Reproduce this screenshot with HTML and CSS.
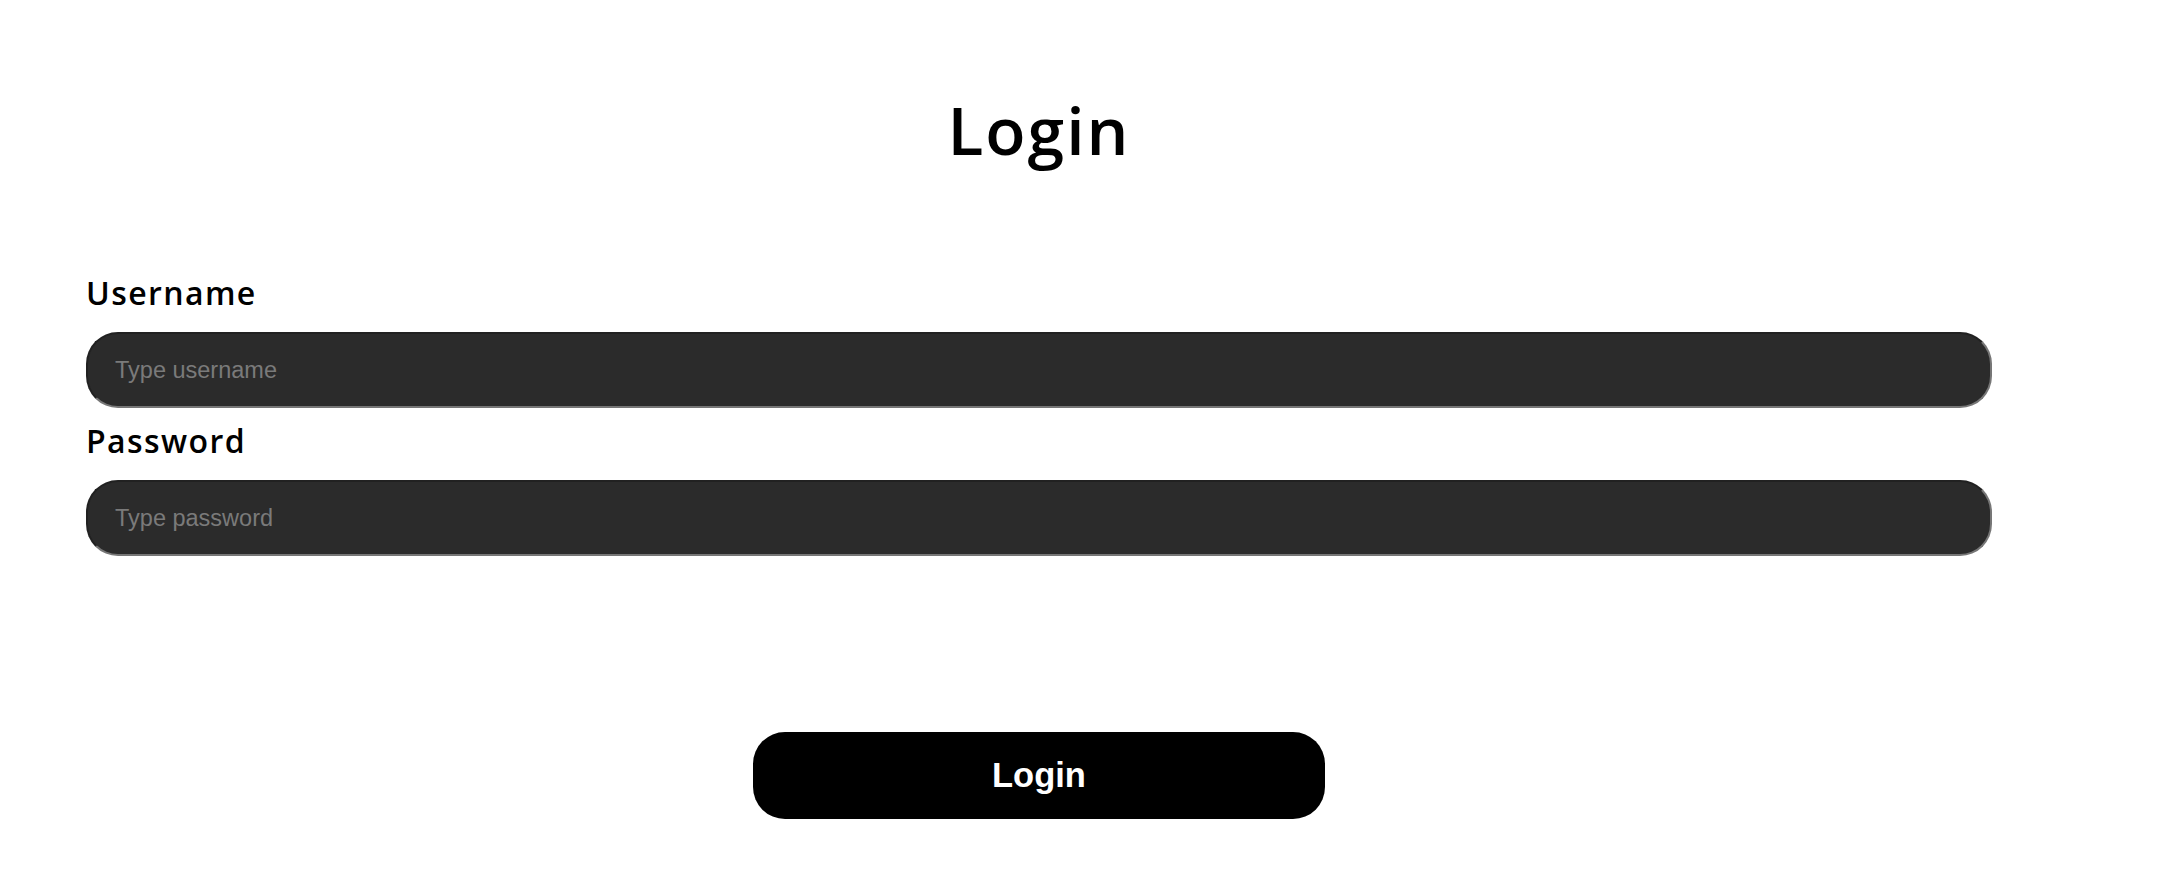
FILE: index.html
```html
<!DOCTYPE html>
<html>
<head>
<meta charset="utf-8">
<link rel="stylesheet" href="styles.css">
</head>
<body>
<main class="page">
  <h1 class="title">Login</h1>
  <form class="form">
    <label class="label" for="u">Username</label>
    <input class="field" id="u" type="text" placeholder="Type username">
    <label class="label" for="p">Password</label>
    <input class="field" id="p" type="password" placeholder="Type password">
    <div class="actions">
      <button class="btn" type="button">Login</button>
    </div>
  </form>
</main>
</body>
</html>
```

FILE: styles.css
```css
html, body {
  margin: 0;
  padding: 0;
  background: #fff;
}
.page {
  font-family: "Open Sans", "Noto Sans", sans-serif;
  color: #000;
  padding: 0 171px 0 86px;
}
.title {
  margin: 0;
  padding-top: 89px;
  text-align: center;
  font-size: 66px;
  line-height: 80px;
  font-weight: 600;
  letter-spacing: 2px;
}
.form {
  display: flex;
  flex-direction: column;
  margin-top: 104px;
}
.label {
  font-size: 32px;
  line-height: 40px;
  font-weight: 600;
  letter-spacing: 1.4px;
  margin-bottom: 19px;
}
.field {
  box-sizing: border-box;
  height: 76px;
  width: 100%;
  border-radius: 32px;
  background: #2b2b2b;
  border: 2px inset #767676;
  padding: 0 27px;
  font-family: "Liberation Sans", Arial, sans-serif;
  font-size: 23.5px;
  color: #fff;
  margin-bottom: 13px;
}
.field::placeholder {
  color: #7a7a7a;
}
.actions {
  display: flex;
  justify-content: center;
  margin-top: 163px;
}
.btn {
  width: 572px;
  height: 87px;
  border: none;
  border-radius: 32px;
  background: #000;
  color: #fff;
  font-family: "Liberation Sans", Arial, sans-serif;
  font-size: 34.5px;
  font-weight: 700;
  cursor: pointer;
}
```
